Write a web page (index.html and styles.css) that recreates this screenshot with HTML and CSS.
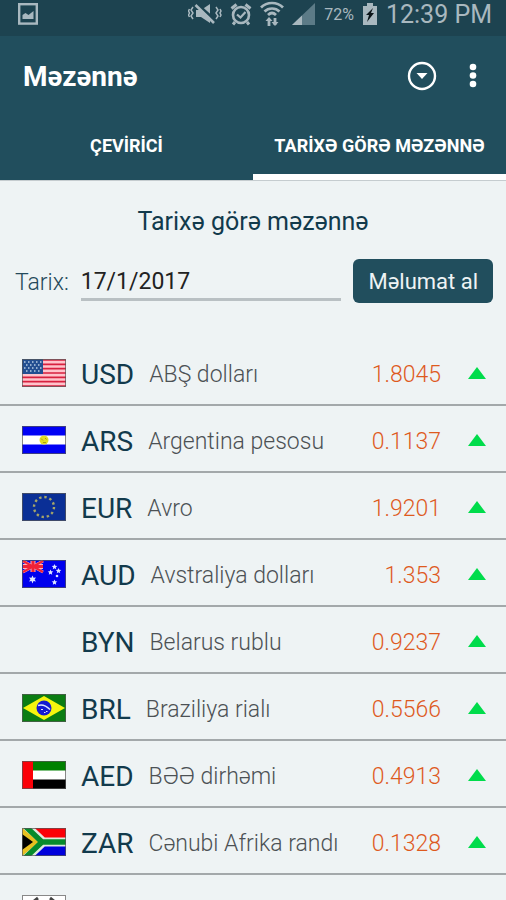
FILE: index.html
```html
<!DOCTYPE html>
<html lang="az">
<head>
  <meta charset="UTF-8">
  <meta name="viewport" content="width=device-width, initial-scale=1">
  <title>Məzənnə</title>
  <link rel="stylesheet" href="styles.css">
</head>
<body>
  <div class="status-bar">
    <svg class="status-picture" width="20" height="22" viewBox="0 0 20 22">
      <rect x="1.2" y="1.2" width="17.6" height="19.4" fill="none" stroke="currentColor" stroke-width="2.4"/>
      <path d="M4.500 16V12l3-2 3 2 5-4v8z" fill="currentColor"/>
    </svg>
    <svg width="34" height="22" viewBox="0 0 34 22" fill="none" stroke="currentColor">
      <path d="M8 7h5l9-6v19l-9-6H8z" fill="currentColor" stroke="none"/>
      <path d="M9 1l19 17" stroke="#1d4350" stroke-width="3"/>
      <path d="M7.500 2l18.500 18" stroke-width="2.600"/>
      <path d="M5 4l-2 3 2 3-2 3 2 3M1.500 6l-1 2 1 2-1 2 1 2M28 4l2 3-2 3 2 3-2 3M32 6l1 2-1 2 1 2-1 2" stroke-width="1.500"/>
    </svg>
    <svg width="22" height="24" viewBox="0 0 22 24" fill="none" stroke="currentColor">
      <circle cx="11" cy="13" r="8" stroke-width="2.600"/>
      <path d="M7 12.500l3.500 3 5-5.500" stroke-width="2.200"/>
      <path d="M1.500 6.500l5-4M20.500 6.500l-5-4M5 20l-2 2.500M17 20l2 2.500" stroke-width="3"/>
    </svg>
    <svg width="24" height="26" viewBox="0 0 24 26" fill="none" stroke="currentColor">
      <path d="M1 6.500c6-6 16-6 22 0M4.500 10.500c4-4 11-4 15 0M8 14c2.500-2.500 5.500-2.500 8 0" stroke-width="2.700"/>
      <path d="M9 25v-7M15 17v7" stroke-width="2.800"/>
      <path d="M5.500 20l3.500-4 3.500 4zM11.500 21l3.500 4 3.500-4z" fill="currentColor" stroke="none"/>
    </svg>
    <svg width="24" height="24" viewBox="0 0 24 24">
      <path d="M0 23L23 1v22z" fill="#5c7b87"/>
      <path d="M0 23L10 13.500V23z" fill="currentColor"/>
    </svg>
    <span class="battery-level">72%</span>
    <svg width="16" height="24" viewBox="0 0 16 24">
      <path d="M1 4h4V1h6v3h4v19H1z" fill="currentColor"/>
      <path d="M11 6l-7 7h3l-2 7 7-9H9z" fill="#0c1519"/>
    </svg>
    <time class="clock">12:39 PM</time>
  </div>

  <header class="app-bar">
    <h1>Məzənnə</h1>
    <button class="icon-button" type="button" aria-label="Seçim">
      <svg width="30" height="30" viewBox="0 0 30 30">
        <circle cx="15" cy="15" r="13" fill="none" stroke="#fff" stroke-width="2.400"/>
        <path d="M9.500 12h11L15 18z" fill="#fff"/>
      </svg>
    </button>
    <button class="icon-button" type="button" aria-label="Menyu">
      <svg width="8" height="26" viewBox="0 0 8 26" fill="#fff">
        <circle cx="4" cy="4" r="3.300"/>
        <circle cx="4" cy="12.500" r="3.300"/>
        <circle cx="4" cy="21" r="3.300"/>
      </svg>
    </button>
  </header>

  <nav class="tabs">
    <a href="#cevirici">ÇEVİRİCİ</a>
    <a class="active" href="#tarix">TARİXƏ GÖRƏ MƏZƏNNƏ</a>
  </nav>

  <main>
    <h2>Tarixə görə məzənnə</h2>

    <form class="date-form">
      <label for="date">Tarix:</label>
      <input type="text" id="date" value="17/1/2017">
      <button type="button">Məlumat al</button>
    </form>

    <ul class="rates">
      <li>
        <svg class="flag" viewBox="0 0 44 28">
          <rect width="44" height="28" fill="#ffc3cb"/>
          <path d="M0 1h44M0 5.300h44M0 9.600h44M0 14h44M0 18.300h44M0 22.600h44M0 27h44" stroke="#d8203f" stroke-width="1.700"/>
          <rect width="21" height="15" fill="#234f91"/>
          <path d="M2 3h18M4 6h16M2 9h18M4 12h16" stroke="#b9cee4" stroke-width="1.300" stroke-dasharray="1.500 2.500"/>
          <rect class="frame" x="0.5" y="0.5" width="43" height="27"/>
        </svg>
        <span class="code">USD</span>
        <span class="name">ABŞ dolları</span>
        <span class="rate">1.8045</span>
        <span class="up"></span>
      </li>
      <li>
        <svg class="flag" viewBox="0 0 44 28">
          <rect width="44" height="28" fill="#0000f5"/>
          <rect y="9.500" width="44" height="9" fill="#fff"/>
          <circle cx="22" cy="14" r="4.500" fill="#e4df22"/>
          <path d="M19 12.500l2 2M23 12l1.500 1.500M21 16.500h3" stroke="#a89e18"/>
          <rect class="frame" x="0.5" y="0.5" width="43" height="27"/>
        </svg>
        <span class="code">ARS</span>
        <span class="name">Argentina pesosu</span>
        <span class="rate">0.1137</span>
        <span class="up"></span>
      </li>
      <li>
        <svg class="flag" viewBox="0 0 44 28">
          <rect width="44" height="28" fill="#0a2f96"/>
          <circle cx="22" cy="14" r="10" fill="none" stroke="#a5a568" stroke-width="2.400" stroke-dasharray="2.400 2.836"/>
          <rect class="frame" x="0.5" y="0.5" width="43" height="27"/>
        </svg>
        <span class="code">EUR</span>
        <span class="name">Avro</span>
        <span class="rate">1.9201</span>
        <span class="up"></span>
      </li>
      <li>
        <svg class="flag" viewBox="0 0 44 28">
          <rect width="44" height="28" fill="#0000ee"/>
          <path d="M1 1l20 11M21 1L1 12" stroke="#ffb3bb" stroke-width="3"/>
          <path d="M1 6.500h20M11 1v11" stroke="#ffb3bb" stroke-width="5"/>
          <path d="M1 1l20 11M21 1L1 12" stroke="#f02237" stroke-width="2"/>
          <path d="M1 6.500h20M11 1v11" stroke="#f02237" stroke-width="3"/>
          <g fill="#dfe6ff">
            <path d="M10.500 15.500l1 2.300 2.500-.4-1.400 2 1.400 2-2.500-.3-1 2.400-1-2.400-2.500.3 1.400-2-1.400-2 2.500.4z"/>
            <path d="M32.500 4l.8 1.700 2 .3-1.500 1.300.4 2-1.700-1-1.700 1 .4-2L29.700 6l2-.3z"/>
            <path d="M28.500 9.500l.8 1.700 2 .3-1.500 1.300.4 2-1.700-1-1.700 1 .4-2-1.500-1.300 2-.3z"/>
            <path d="M36.500 8l.8 1.700 2 .3-1.500 1.300.4 2-1.700-1-1.700 1 .4-2-1.500-1.300 2-.3z"/>
            <path d="M32.500 19.500l.8 1.700 2 .3-1.500 1.300.4 2-1.700-1-1.700 1 .4-2-1.500-1.300 2-.3z"/>
            <circle cx="35" cy="16" r="1.300"/>
          </g>
          <rect class="frame" x="0.5" y="0.5" width="43" height="27"/>
        </svg>
        <span class="code">AUD</span>
        <span class="name">Avstraliya dolları</span>
        <span class="rate">1.353</span>
        <span class="up"></span>
      </li>
      <li>
        <span class="flag"></span>
        <span class="code">BYN</span>
        <span class="name">Belarus rublu</span>
        <span class="rate">0.9237</span>
        <span class="up"></span>
      </li>
      <li>
        <svg class="flag" viewBox="0 0 44 28">
          <rect width="44" height="28" fill="#0b7d13"/>
          <path d="M1 14L22 2l21 12-21 12z" fill="#f5f50f"/>
          <circle cx="22" cy="14" r="7.500" fill="#1418d0"/>
          <path d="M16 11.500q6-2 12 4" fill="none" stroke="#dfe4ff" stroke-width="1.500"/>
          <path d="M19 15.500h2M22 18.500h1.500M24 17.500h1.500" stroke="#dfe4ff"/>
          <rect class="frame" x="0.5" y="0.5" width="43" height="27"/>
        </svg>
        <span class="code">BRL</span>
        <span class="name">Braziliya rialı</span>
        <span class="rate">0.5566</span>
        <span class="up"></span>
      </li>
      <li>
        <svg class="flag" viewBox="0 0 44 28">
          <rect width="44" height="28" fill="#fff"/>
          <rect width="44" height="9.500" fill="#008100"/>
          <rect y="18.500" width="44" height="9.500" fill="#000"/>
          <rect width="11" height="28" fill="#fb0007"/>
          <rect class="frame" x="0.5" y="0.5" width="43" height="27"/>
        </svg>
        <span class="code">AED</span>
        <span class="name">BƏƏ dirhəmi</span>
        <span class="rate">0.4913</span>
        <span class="up"></span>
      </li>
      <li>
        <svg class="flag" viewBox="0 0 44 28">
          <rect width="44" height="14" fill="#fb0007"/>
          <rect y="14" width="44" height="14" fill="#0000dc"/>
          <path d="M3-3l18 17h23M3 31l18-17" fill="none" stroke="#dfe9df" stroke-width="9"/>
          <path d="M0 0l17 14L0 28z" fill="#e8c020"/>
          <path d="M2-3l18 17h24M2 31l18-17" fill="none" stroke="#078b2c" stroke-width="5.500"/>
          <path d="M0 3l15 11L0 25z" fill="#e8c020"/>
          <path d="M0 6l11 8-11 8z" fill="#000"/>
          <rect class="frame" x="0.5" y="0.5" width="43" height="27"/>
        </svg>
        <span class="code">ZAR</span>
        <span class="name">Cənubi Afrika randı</span>
        <span class="rate">0.1328</span>
        <span class="up"></span>
      </li>
      <li>
        <svg class="flag" viewBox="0 0 44 28">
          <rect width="44" height="28" fill="#fff"/>
          <path d="M11 7l5-4M28 3l5 4M11 21l5 4M28 25l5-4" stroke="#444" stroke-width="3"/>
          <path d="M15 14a7 7 0 0 1 14 0z" fill="#e0303a"/>
          <path d="M15 14a7 7 0 0 0 14 0z" fill="#1c3f94"/>
          <rect class="frame" x="0.5" y="0.5" width="43" height="27"/>
        </svg>
        <span class="code">KRW</span>
      </li>
    </ul>
  </main>
</body>
</html>
```
FILE: styles.css
```css
* {
  box-sizing: border-box;
}

body {
  margin: 0;
  height: 100vh;
  overflow: hidden;
  background: #eef3f4;
  color: #123a4c;
  font-family: Roboto, "Noto Sans", sans-serif;
}

button {
  border: none;
  font-family: inherit;
  cursor: pointer;
}

.status-bar {
  display: flex;
  align-items: center;
  gap: 8px;
  height: 36px;
  padding: 0 14px 8px 18px;
  background: #1d4350;
  color: #a9b8bf;
}

.status-picture {
  margin-right: auto;
}

.battery-level {
  font-size: 16px;
}

.clock {
  font-size: 25px;
}

.app-bar {
  display: flex;
  align-items: center;
  gap: 32px;
  height: 80px;
  padding: 0 29px 0 23px;
  background: #214e5d;
}

h1 {
  flex: 1;
  margin: 0;
  color: #fff;
  font-size: 28px;
  font-weight: 700;
}

.icon-button {
  display: flex;
  padding: 0;
  background: none;
}

.tabs {
  display: flex;
  height: 65px;
  background: #214e5d;
  border-bottom: 1px solid #c5cccf;
}

.tabs a {
  flex: 1;
  padding-top: 18px;
  color: #fff;
  font-size: 18px;
  font-weight: 700;
  line-height: 24px;
  text-align: center;
  text-decoration: none;
  white-space: nowrap;
}

.tabs .active {
  border-bottom: 6px solid #fff;
}

h2 {
  margin: 25px 0 21px;
  font-size: 25px;
  font-weight: 400;
  line-height: 32px;
  text-align: center;
}

.date-form {
  display: flex;
  align-items: center;
  gap: 12px;
  padding: 0 13px 0 15px;
  font-size: 23px;
}

.date-form label {
  padding-top: 3px;
  color: #24495a;
  font-weight: 300;
}

.date-form input {
  flex: 1;
  min-width: 0;
  height: 40px;
  padding: 4px 0 0;
  background: none;
  border: none;
  border-bottom: 3px solid #b9c0c3;
  color: #222;
  font: inherit;
}

.date-form button {
  height: 44px;
  padding: 0 15px;
  background: #214e5d;
  border-radius: 6px;
  color: #eef3f4;
  font-size: 22px;
}

.rates {
  margin: 36px 0 0;
  padding: 0;
  list-style: none;
}

.rates li {
  display: flex;
  align-items: center;
  height: 67px;
  padding: 2px 20px 0 22px;
  border-bottom: 2px solid #a3a8aa;
}

.flag {
  width: 44px;
  height: 28px;
  margin-right: 15px;
}

.frame {
  fill: none;
  stroke: #555;
  stroke-opacity: 0.7;
}

.code,
.name,
.rate {
  padding-top: 3px;
}

.code {
  font-size: 28px;
}

.name {
  margin-left: 15px;
  color: #4c5154;
  font-size: 23px;
  font-weight: 300;
}

.rate {
  margin-left: auto;
  color: #de5a1e;
  font-size: 23px;
  font-weight: 300;
}

.up {
  margin-left: 27px;
  border: 9px solid transparent;
  border-top: none;
  border-bottom: 12px solid #00dc4b;
}
```
